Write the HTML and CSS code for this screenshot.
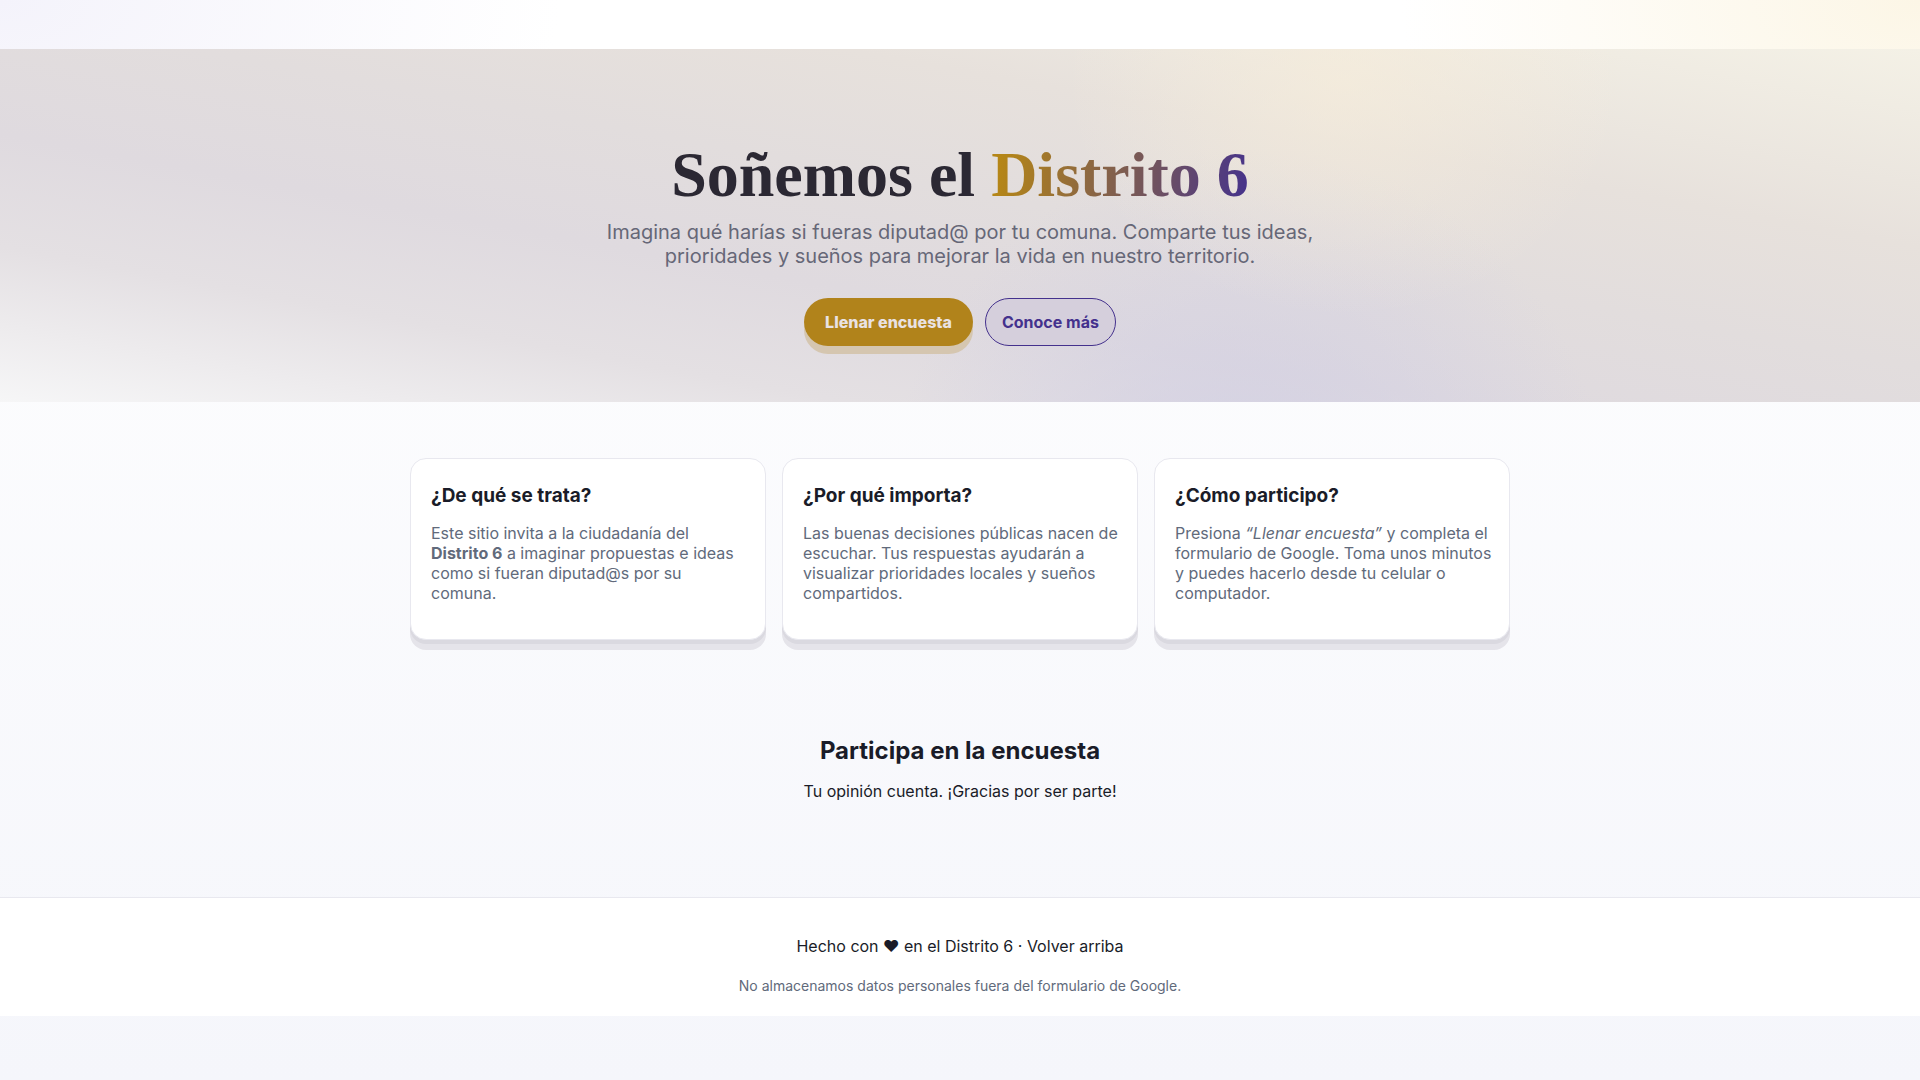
FILE: index.html
```
<!DOCTYPE html>
<html lang="es">
<head>
    <meta charset="UTF-8">
    <meta name="viewport" content="width=device-width, initial-scale=1.0">
    <title>Soñemos el Distrito 6</title>
    <link rel="stylesheet" href="styles.css">
</head>
<body id="top">

    <header class="topbar"></header>

    <main>
        <section class="hero">
            <h1>Soñemos el <span class="accent">Distrito 6</span></h1>
            <p class="lead">Imagina qué harías si fueras diputad@ por tu comuna. Comparte tus ideas, prioridades y sueños para mejorar la vida en nuestro territorio.</p>
            <div class="actions">
                <a class="btn btn-primary" href="#encuesta">Llenar encuesta</a>
                <a class="btn btn-outline" href="#info">Conoce más</a>
            </div>
        </section>

        <section class="cards" id="info">
            <article class="card">
                <h3>¿De qué se trata?</h3>
                <p>Este sitio invita a la ciudadanía del <strong>Distrito 6</strong> a imaginar propuestas e ideas como si fueran diputad@s por su<br> comuna.</p>
            </article>
            <article class="card">
                <h3>¿Por qué importa?</h3>
                <p>Las buenas decisiones públicas nacen de escuchar. Tus respuestas ayudarán a visualizar prioridades locales y sueños compartidos.</p>
            </article>
            <article class="card">
                <h3>¿Cómo participo?</h3>
                <p>Presiona <em>“Llenar encuesta”</em> y completa el formulario de Google. Toma unos minutos y puedes hacerlo desde tu celular o computador.</p>
            </article>
        </section>

        <section class="survey" id="encuesta">
            <h2>Participa en la encuesta</h2>
            <p>Tu opinión cuenta. ¡Gracias por ser parte!</p>
        </section>
    </main>

    <footer class="footer">
        <p>Hecho con ❤ en el Distrito 6 · <a href="#top">Volver arriba</a></p>
        <p class="note">No almacenamos datos personales fuera del formulario de Google.</p>
    </footer>

</body>
</html>
```
FILE: styles.css
```
:root {
    --gold: #b58617;
    --violet: #44318d;
    --ink: #1a1c28;
    --muted: #616a7b;
    --line: #e8e8ef;
}

* {
    margin: 0;
    padding: 0;
    box-sizing: border-box;
}

body {
    min-height: 100vh;
    font-family: Inter, "Liberation Sans", sans-serif;
    font-size: 16px;
    line-height: 20px;
    color: var(--ink);
    background: linear-gradient(180deg, #ffffff, #f5f6fb);
}

a {
    color: inherit;
    text-decoration: none;
}

.topbar {
    height: 49px;
    background:
        radial-gradient(560px 300px at 0 0, #f4f3fb, rgba(255, 255, 255, 0)),
        radial-gradient(520px 300px at 100% 0, #fcf6e6, rgba(255, 255, 255, 0)),
        #fff;
}

/* Hero */
.hero {
    display: flex;
    flex-direction: column;
    align-items: center;
    padding: 90px 20px 56px;
    text-align: center;
    background:
        radial-gradient(280px 240px at 70% 8%, rgba(248, 238, 218, 0.6), rgba(248, 238, 218, 0)),
        radial-gradient(circle 360px at 65% 130%, rgba(207, 205, 228, 0.8), rgba(207, 205, 228, 0)),
        linear-gradient(to top right, #f6f6f7, #e4e0e3 22%, #dfdadf 38%, #e2dddd 55%, #e7e1dc 72%, #f4f1e6);
}

.hero h1 {
    font-family: "Liberation Serif", serif;
    font-size: 64px;
    line-height: 72px;
    color: #2b2833;
}

.accent {
    background: linear-gradient(100deg, var(--gold) 5%, var(--violet));
    -webkit-background-clip: text;
    background-clip: text;
    color: transparent;
}

.lead {
    max-width: 720px;
    margin-top: 9px;
    font-size: 20px;
    line-height: 24px;
    color: #666777;
}

.actions {
    display: flex;
    flex-wrap: wrap;
    justify-content: center;
    gap: 12px;
    margin-top: 30px;
}

.btn {
    display: flex;
    align-items: center;
    height: 48px;
    border-radius: 24px;
    font-weight: 700;
}

.btn-primary {
    padding: 0 21px;
    background: #b1831b;
    color: #e9e2e3;
    font-weight: 800;
    box-shadow: 0 8px 0 #d5c6b0;
}

.btn-outline {
    padding: 0 16px;
    border: 1px solid var(--violet);
    background: #d5cfdc;
    color: var(--violet);
}

/* Cards */
.cards {
    display: grid;
    grid-template-columns: repeat(3, 1fr);
    gap: 16px;
    max-width: 1140px;
    margin: 0 auto;
    padding: 56px 20px;
}

.card {
    padding: 25px 12px 36px 20px;
    border: 1px solid var(--line);
    border-radius: 16px;
    background: #fff;
    box-shadow: 0 4px 0 #dad9e0, 0 10px 0 #e5e4ea;
}

.card h3 {
    margin-bottom: 15px;
    font-size: 19px;
    line-height: 24px;
}

.card p {
    color: var(--muted);
}

.card strong {
    white-space: nowrap;
}

.survey {
    padding: 41px 20px 96px;
    text-align: center;
}

.survey h2 {
    margin-bottom: 16px;
    font-size: 24px;
    line-height: 28px;
}

.footer {
    padding: 38px 20px 20px;
    border-top: 1px solid var(--line);
    background: #fff;
    text-align: center;
}

.footer .note {
    margin-top: 20px;
    font-size: 14px;
    color: var(--muted);
}

@media (max-width: 800px) {
    .cards {
        grid-template-columns: 1fr;
    }
}
```
